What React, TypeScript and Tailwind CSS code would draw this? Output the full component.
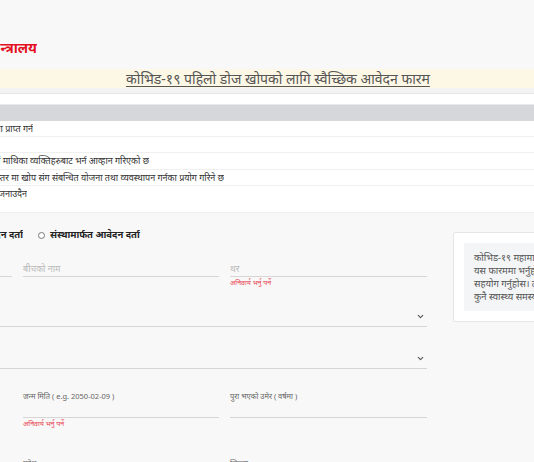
import { ChevronDown } from "lucide-react";

/* ------------------------------------------------------------------ */
/*  Small pieces                                                       */
/* ------------------------------------------------------------------ */

function Required() {
  return (
    <p className="mt-[1px] text-[7px] leading-[9px] text-[#e8424f]">
      अनिवार्य भर्नु पर्ने
    </p>
  );
}

function SelectLine() {
  return (
    <div className="flex h-[20px] items-center justify-end border-b border-[#d6d6d6] pr-[2px]">
      <ChevronDown className="h-[9px] w-[9px] text-[#555]" strokeWidth={3} />
    </div>
  );
}

/* ------------------------------------------------------------------ */
/*  Page                                                               */
/* ------------------------------------------------------------------ */

export default function App() {
  return (
    <div className="h-[462px] w-full overflow-hidden bg-[#f8f8f8] font-['Noto_Sans',sans-serif] text-[#333]">
      {/* Header */}
      <header className="h-[69px] pt-[37px]">
        <div className="flex w-[37px] justify-end overflow-hidden whitespace-nowrap text-[14px] font-bold leading-[22px] text-[#e3101f]">
          स्वास्थ्य तथा जनसंख्या मन्त्रालय
        </div>
      </header>

      {/* Form title band */}
      <div className="flex h-[19px] items-center justify-center bg-[#fdf7e6] pl-[22px]">
        <h1 className="whitespace-nowrap text-[14px] leading-[19px] text-[#555] underline underline-offset-2">
          कोभिड-१९ पहिलो डोज खोपको लागि स्वैच्छिक आवेदन फारम
        </h1>
      </div>
      <div className="h-[6px] border-b border-[#e6e6e6] bg-[#f3f3f3]" />

      {/* Notes table */}
      <div className="bg-white pt-[10px] text-[9px] text-[#333]">
        <div className="h-[17px] border-t border-[#e9e9ec] bg-[#d6d7db]" />
        <div className="flex h-[16px] items-center border-b border-[#efefef]">
          <div className="flex w-[33px] justify-end overflow-hidden whitespace-nowrap">
            सेवा प्राप्त गर्न
          </div>
        </div>
        <div className="h-[16px] border-b border-[#efefef]" />
        <div className="flex h-[17px] items-center border-b border-[#efefef]">
          <div className="flex w-[149px] justify-end overflow-hidden whitespace-nowrap">
            ५५ वर्षा माथिका व्यक्तिहरुबाट भर्न आव्हान गरिएको छ
          </div>
        </div>
        <div className="flex h-[16px] items-center border-b border-[#efefef]">
          <div className="flex w-[224px] justify-end overflow-hidden whitespace-nowrap">
            स्थानीय स्तर मा खोप संग संबन्धित योजना तथा व्यवस्थापन गर्नका प्रयोग गरिने छ
          </div>
        </div>
        <div className="h-[27px] border-b border-[#efefef] pt-[1px]">
          <div className="flex w-[27px] justify-end overflow-hidden whitespace-nowrap leading-[14px]">
            सुनिश्चितता जनाउदैन
          </div>
        </div>
      </div>

      {/* Form + side note */}
      <main className="flex items-start">
        <section className="w-[427px] shrink-0">
          {/* Application type */}
          <div className="mt-[15px] flex h-[14px] items-center text-[9.5px] font-bold text-[#222]">
            <div className="flex w-[23px] justify-end overflow-hidden whitespace-nowrap">
              व्यक्तिगत आवेदन दर्ता
            </div>
            <span className="ml-[15px] h-[7px] w-[7px] rounded-full border border-[#777] bg-white" />
            <span className="ml-[5px] whitespace-nowrap">संस्थामार्फत आवेदन दर्ता</span>
          </div>

          {/* Name */}
          <div className="mt-[21px] grid grid-cols-[12px_196px_197px] gap-x-[11px] text-[9px]">
            <div className="h-[14px] border-b border-[#d6d6d6]" />
            <div className="h-[14px] border-b border-[#d6d6d6] leading-[12px] text-[#bbb]">
              बीचको नाम
            </div>
            <div>
              <div className="h-[14px] border-b border-[#d6d6d6] leading-[12px] text-[#bbb]">
                थर
              </div>
              <Required />
            </div>
          </div>

          {/* Selects */}
          <div className="mt-[20px]">
            <SelectLine />
          </div>
          <div className="mt-[22px]">
            <SelectLine />
          </div>

          {/* Birth date / age */}
          <div className="mt-[21px] grid grid-cols-[196px_197px] gap-x-[11px] pl-[23px] text-[7.5px] text-[#666]">
            <div>
              <div className="h-[28px] border-b border-[#d6d6d6] pt-[1px] leading-[10px]">
                जन्म मिति ( e.g. 2050-02-09 )
              </div>
              <Required />
            </div>
            <div className="h-[28px] border-b border-[#d6d6d6] pt-[1px] leading-[10px]">
              पुरा भएको उमेर ( वर्षमा )
            </div>
          </div>

          <div className="mt-[30px] grid grid-cols-[196px_197px] gap-x-[11px] pl-[23px] text-[7.5px] leading-[10px] text-[#666]">
            <div>प्रदेश</div>
            <div>जिल्ला</div>
          </div>
        </section>

        <aside className="ml-[26px] mt-[19px] w-[240px] shrink-0 rounded-[2px] border border-[#e6e6e6] bg-white p-[10px]">
          <div className="bg-[#f4f5f7] px-[10px] py-[8px] text-[9.5px] leading-[13px] text-[#555]">
            <p className="whitespace-nowrap">कोभिड-१९ महामारी विरुद्धको खोप</p>
            <p className="whitespace-nowrap">यस फारममा भर्नुहोस र खोप</p>
            <p className="whitespace-nowrap">सहयोग गर्नुहोस। तपाईंलाई</p>
            <p className="whitespace-nowrap">कुनै स्वास्थ्य समस्या भएमा</p>
          </div>
        </aside>
      </main>
    </div>
  );
}
